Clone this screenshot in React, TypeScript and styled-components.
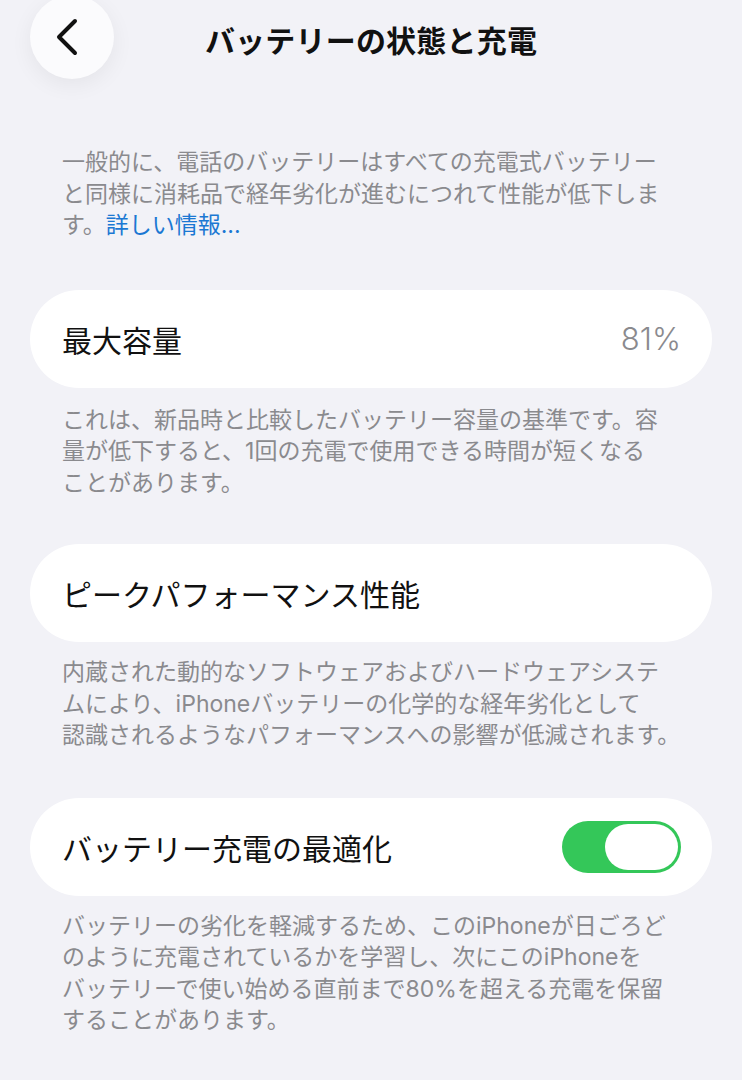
import styled, { createGlobalStyle } from "styled-components";

const GlobalStyle = createGlobalStyle`
    html, body {
        margin: 0;
        padding: 0;
        background: #f2f2f7;
    }
    body {
        font-family: "Inter", "Noto Sans CJK JP", sans-serif;
        -webkit-font-smoothing: antialiased;
    }
`;

const Page = styled.div`
    width: 742px;
    min-height: 1080px;
    box-sizing: border-box;
    padding: 0 30px;
    overflow: hidden;
`;

const Header = styled.div`
    display: grid;
    grid-template-columns: 84px 1fr 84px;
    align-items: center;
    height: 79px;
`;

const BackButton = styled.div`
    width: 84px;
    height: 84px;
    margin-top: -5px;
    align-self: start;
    border-radius: 50%;
    background: #fbfbfd;
    box-shadow: 0 6px 22px rgba(0, 0, 0, 0.06);
    display: flex;
    align-items: center;
    justify-content: center;
`;

const Title = styled.div`
    text-align: center;
    font-family: "Noto Sans CJK JP", sans-serif;
    font-size: 30px;
    font-weight: 700;
    color: #111;
    letter-spacing: 0.2px;
    margin-top: -2px;
`;

const Note = styled.div<{ $top?: number; $bottom?: number }>`
    margin: ${(p) => p.$top ?? 0}px 0 ${(p) => p.$bottom ?? 0}px;
    padding: 0 32px;
    font-family: "Inter", "Noto Sans CJK JP", sans-serif;
    font-size: 23px;
    line-height: 31.5px;
    color: #8a8a8e;
    white-space: nowrap;
`;

const MoreLink = styled.span`
    color: #1b78d3;
`;

const Card = styled.div`
    height: 98px;
    border-radius: 49px;
    background: #ffffff;
    display: flex;
    align-items: center;
    justify-content: space-between;
    padding: 0 31px 0 32px;
`;

const Label = styled.div`
    font-family: "Noto Sans CJK JP", sans-serif;
    font-size: 30px;
    color: #111;
`;

const Value = styled.div`
    font-family: "Inter", sans-serif;
    font-size: 31px;
    font-weight: 300;
    color: #8a8a8e;
`;

const Toggle = styled.div<{ $on: boolean }>`
    width: 119px;
    height: 52px;
    box-sizing: border-box;
    padding: 3px;
    border-radius: 26px;
    background: ${(p) => (p.$on ? "#34c759" : "#e5e5ea")};
    display: flex;
    justify-content: ${(p) => (p.$on ? "flex-end" : "flex-start")};
`;

const Knob = styled.div`
    width: 73px;
    height: 46px;
    border-radius: 23px;
    background: #ffffff;
`;

function Chevron() {
    return (
        <svg width="30" height="40" viewBox="0 0 30 40" style={{ marginLeft: -6 }}>
            <polyline
                points="21,4 5,20 21,36"
                fill="none"
                stroke="#111"
                strokeWidth="4"
                strokeLinecap="round"
                strokeLinejoin="round"
            />
        </svg>
    );
}

export default function App() {
    return (
        <>
            <GlobalStyle />
            <Page>
                <Header>
                    <BackButton>
                        <Chevron />
                    </BackButton>
                    <Title>バッテリーの状態と充電</Title>
                    <div />
                </Header>

                <Note $top={68} $bottom={48}>
                    一般的に、電話のバッテリーはすべての充電式バッテリー
                    <br />
                    と同様に消耗品で経年劣化が進むにつれて性能が低下しま
                    <br />
                    す。<MoreLink>詳しい情報...</MoreLink>
                </Note>

                <Card>
                    <Label>最大容量</Label>
                    <Value>81%</Value>
                </Card>
                <Note $top={17} $bottom={45}>
                    これは、新品時と比較したバッテリー容量の基準です。容
                    <br />
                    量が低下すると、1回の充電で使用できる時間が短くなる
                    <br />
                    ことがあります。
                </Note>

                <Card>
                    <Label>ピークパフォーマンス性能</Label>
                </Card>
                <Note $top={15} $bottom={46}>
                    内蔵された動的なソフトウェアおよびハードウェアシステ
                    <br />
                    ムにより、iPhoneバッテリーの化学的な経年劣化として
                    <br />
                    認識されるようなパフォーマンスへの影響が低減されます。
                </Note>

                <Card>
                    <Label>バッテリー充電の最適化</Label>
                    <Toggle $on={true}>
                        <Knob />
                    </Toggle>
                </Card>
                <Note $top={15}>
                    バッテリーの劣化を軽減するため、このiPhoneが日ごろど
                    <br />
                    のように充電されているかを学習し、次にこのiPhoneを
                    <br />
                    バッテリーで使い始める直前まで80%を超える充電を保留
                    <br />
                    することがあります。
                </Note>
            </Page>
        </>
    );
}
